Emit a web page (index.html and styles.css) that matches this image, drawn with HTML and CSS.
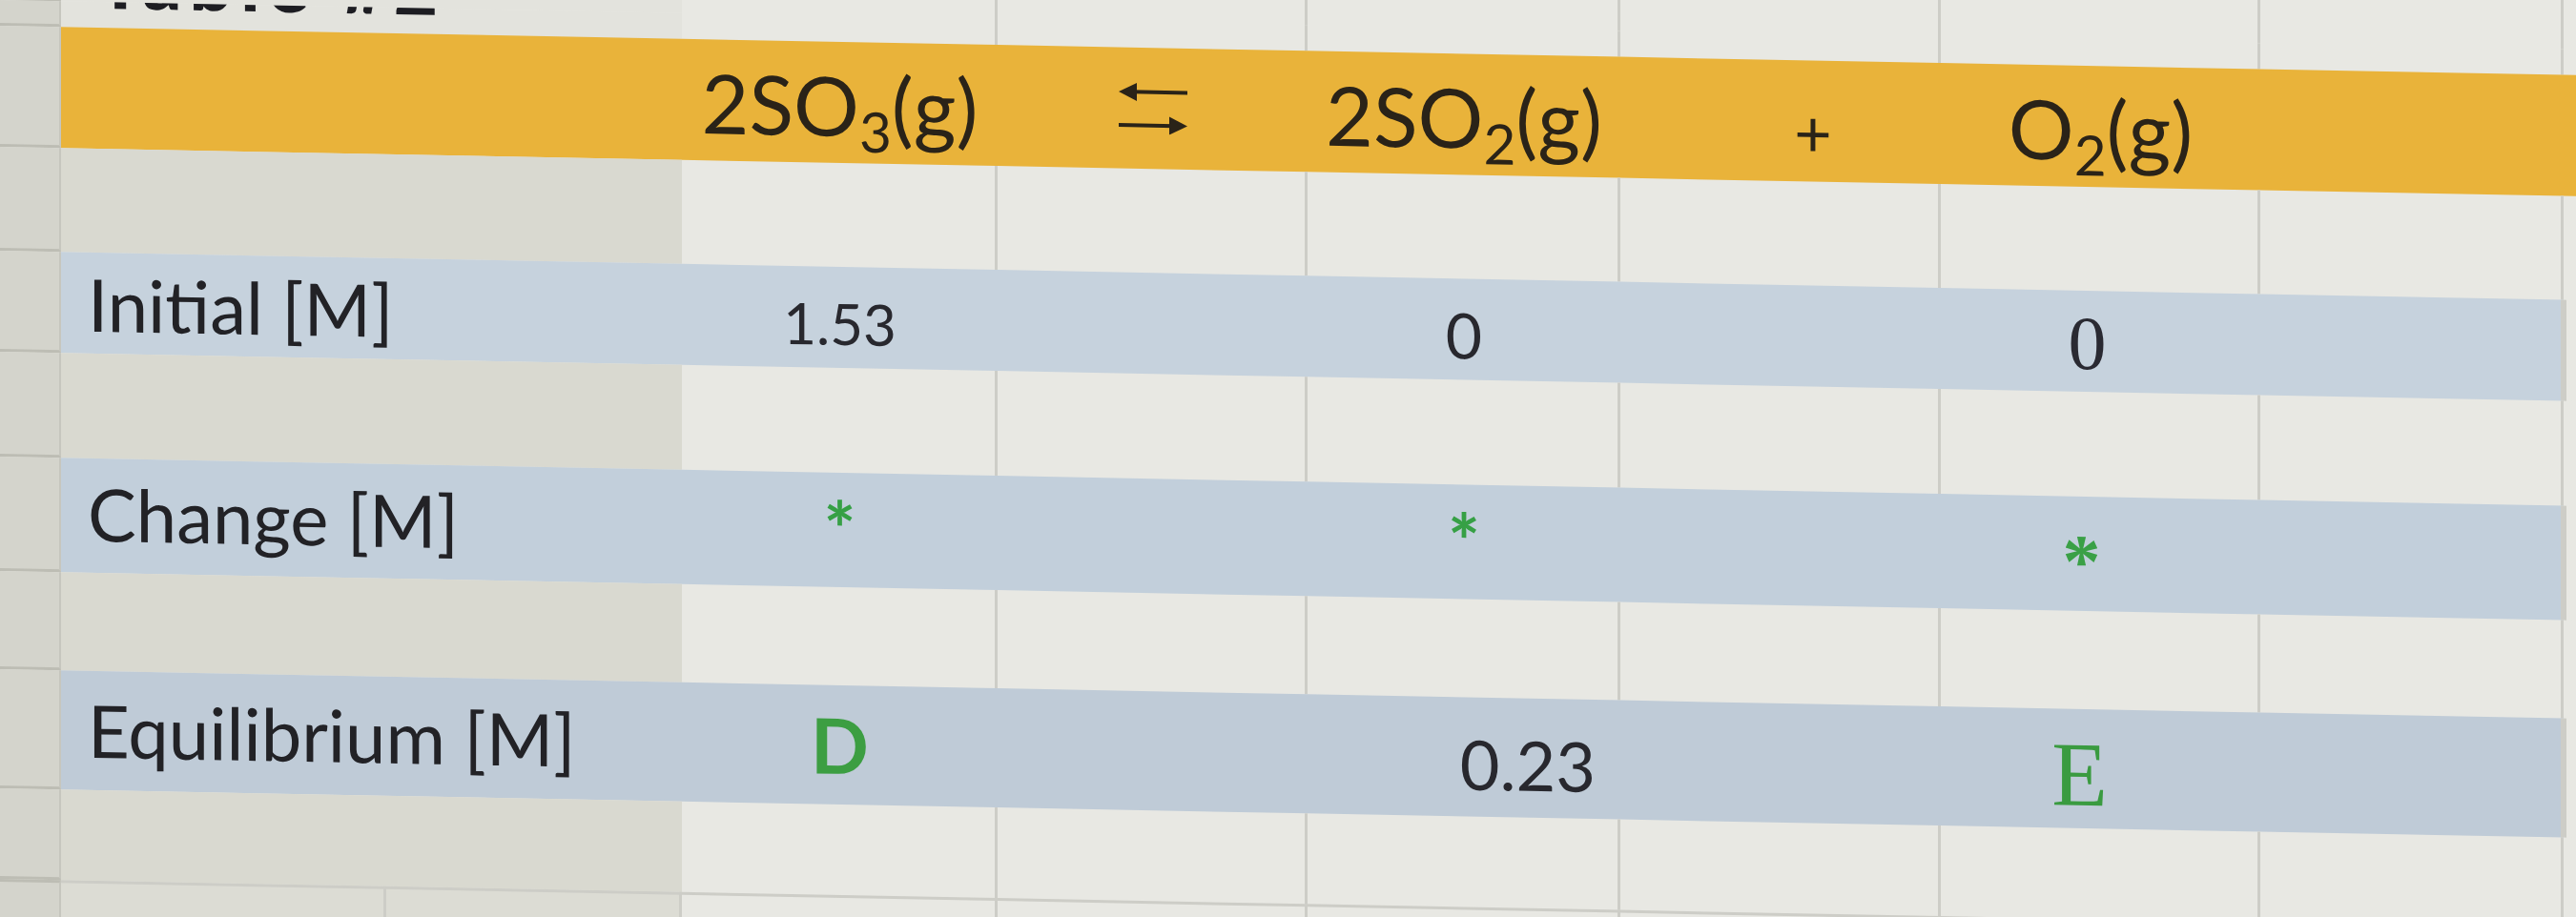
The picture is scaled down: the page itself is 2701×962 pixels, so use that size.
FILE: index.html
```html
<!DOCTYPE html>
<html lang="en">
<head>
<meta charset="utf-8">
<title>ICE table</title>
<link rel="stylesheet" href="styles.css">
</head>
<body>
<div class="sheet">
  <div class="row r-pre">
    <div class="c gut"></div><div class="c span2 top"></div>
    <div class="c ln"></div><div class="c ln"></div><div class="c ln"></div><div class="c ln"></div><div class="c ln"></div><div class="c ln"></div><div class="c"></div>
  </div>
  <div class="row r-title">
    <div class="c gut"></div>
    <div class="c span2 top title-cell"><span class="title">Table #2</span></div>
    <div class="c ln"></div><div class="c ln"></div><div class="c ln"></div><div class="c ln"></div><div class="c ln"></div><div class="c ln"></div><div class="c"></div>
  </div>
  <div class="row r-gold gold">
    <div class="c gut"></div>
    <div class="c span2"></div>
    <div class="c ctr"><span class="head">2SO<sub>3</sub>(g)</span></div>
    <div class="c ctr"><svg class="arrow" viewBox="0 0 72 54" width="72" height="54" aria-hidden="true"><rect x="14" y="7.5" width="58" height="4"/><polygon points="0,9.5 19,0 19,19"/><rect x="0" y="42.5" width="58" height="4"/><polygon points="72,44.5 53,35 53,54"/></svg></div>
    <div class="c ctr"><span class="head">2SO<sub>2</sub>(g)</span></div>
    <div class="c ctr plus-cell"><span class="plus">+</span></div>
    <div class="c ctr"><span class="head">O<sub>2</sub>(g)</span></div>
    <div class="c"></div>
    <div class="c"></div>
  </div>
  <div class="row r-b1">
    <div class="c gut"></div><div class="c span2 lfill"></div>
    <div class="c ln"></div><div class="c ln"></div><div class="c ln"></div><div class="c ln"></div><div class="c ln"></div><div class="c ln"></div><div class="c"></div>
  </div>
  <div class="row r-init blue1">
    <div class="c gut"></div>
    <div class="c span2 lab"><span class="label lab-init">Initial [M]</span></div>
    <div class="c ctr"><span class="num n153">1.53</span></div>
    <div class="c"></div>
    <div class="c ctr"><span class="num n0a">0</span></div>
    <div class="c"></div>
    <div class="c ctr h-serif0"><span class="serif0">0</span></div>
    <div class="c ln"></div>
    <div class="c white"></div>
  </div>
  <div class="row r-b2">
    <div class="c gut"></div><div class="c span2 lfill"></div>
    <div class="c ln"></div><div class="c ln"></div><div class="c ln"></div><div class="c ln"></div><div class="c ln"></div><div class="c ln"></div><div class="c"></div>
  </div>
  <div class="row r-change blue2">
    <div class="c gut"></div>
    <div class="c span2 lab"><span class="label lab-change">Change [M]</span></div>
    <div class="c ctr"><span class="star">*</span></div>
    <div class="c"></div>
    <div class="c ctr"><span class="star">*</span></div>
    <div class="c"></div>
    <div class="c ctr h-star"><span class="star-serif">*</span></div>
    <div class="c ln"></div>
    <div class="c white"></div>
  </div>
  <div class="row r-b3">
    <div class="c gut"></div><div class="c span2 lfill"></div>
    <div class="c ln"></div><div class="c ln"></div><div class="c ln"></div><div class="c ln"></div><div class="c ln"></div><div class="c ln"></div><div class="c"></div>
  </div>
  <div class="row r-eq blue3">
    <div class="c gut"></div>
    <div class="c span2 lab"><span class="label lab-eq">Equilibrium [M]</span></div>
    <div class="c ctr"><span class="ansD">D</span></div>
    <div class="c"></div>
    <div class="c right"><span class="num n023">0.23</span></div>
    <div class="c"></div>
    <div class="c ctr h-E"><span class="ansE">E</span></div>
    <div class="c ln"></div>
    <div class="c white"></div>
  </div>
  <div class="row r-b4">
    <div class="c gut"></div><div class="c span2 lfill"></div>
    <div class="c ln"></div><div class="c ln"></div><div class="c ln"></div><div class="c ln"></div><div class="c ln"></div><div class="c ln"></div><div class="c"></div>
  </div>
  <div class="row r-last">
    <div class="c gut"></div><div class="c ln lastb"></div><div class="c ln lastc"></div>
    <div class="c ln"></div><div class="c ln"></div><div class="c ln"></div><div class="c ln"></div><div class="c ln"></div><div class="c ln"></div><div class="c"></div>
  </div>
</div>
</body>
</html>
```

FILE: styles.css
```css
* { box-sizing: border-box; }

html, body {
  margin: 0;
  padding: 0;
  width: 2701px;
  height: 962px;
  overflow: hidden;
  background: #e8e8e3;
}

.sheet {
  display: flex;
  flex-direction: column;
  margin-top: -60px;
  transform: skewY(1.1deg);
  transform-origin: 0 60px;
  font-family: Lato, "Noto Sans", sans-serif;
  color: #242428;
}

.row {
  display: grid;
  grid-template-columns: 64px 341px 310px 331px 325px 328px 336px 335px 318px 1fr;
}

.r-pre   { height: 60px; }
.r-title { height: 27px; }
.r-gold  { height: 127px; }
.r-b1    { height: 109px; }
.r-init  { height: 106px; }
.r-b2    { height: 110px; }
.r-change{ height: 120px; }
.r-b3    { height: 103px; }
.r-eq    { height: 125px; }
.r-b4    { height: 95px; }
.r-last  { height: 140px; }

.c {
  display: flex;
  align-items: flex-end;
  min-width: 0;
  overflow: visible;
}

.span2 { grid-column: span 2; }
.ctr { justify-content: center; }
.right { justify-content: flex-end; padding-right: 26px; }

.ln { border-right: 3px solid #cdcdc7; }

.gut {
  background: #d4d4cc;
  border-bottom: 3px solid #bdbdb4;
  border-right: 2px solid #c6c6be;
}

.top { background: #e3e3dd; }
.lfill { background: #d9d9d0; }

.gold > .c:not(.gut) { background: #e9b33a; }
.blue1 > .c:not(.gut):not(.white) { background: #c6d2dd; }
.blue2 > .c:not(.gut):not(.white) { background: #c2cfdb; }
.blue3 > .c:not(.gut):not(.white) { background: #bfcbd7; }
.white { background: #e8e8e3; border-left: 3px solid #cdcdc7; }

.r-last > .c { border-top: 3px solid #cdcdc7; }
.r-last > .gut { border-top: 3px solid #bdbdb4; }
.lastb, .lastc { background: #dcdcd4; }

/* title sliver: only the foot of the letters shows above the table */
.title-cell { overflow: hidden; align-items: flex-start; padding-left: 38px; }
.title {
  display: block;
  font-weight: 900;
  font-size: 80px;
  line-height: 1;
  margin-top: -64px;
  letter-spacing: 8px;
  color: #1d1d22;
}

/* header */
.head {
  font-size: 86px;
  line-height: 1;
  margin-bottom: 18px;
  color: #2a2318;
  white-space: nowrap;
}
.head sub {
  font-size: 0.68em;
  line-height: 0;
  vertical-align: -0.28em;
}
.arrow { fill: #2a2318; margin-bottom: 36px; }
.plus-cell { padding-left: 68px; }
.plus {
  font-size: 68px;
  line-height: 1;
  margin-bottom: 18px;
  color: #2a2318;
}

/* labels */
.lab { padding-left: 28px; }
.label {
  font-size: 76px;
  line-height: 1;
  white-space: nowrap;
  color: #222226;
}
.lab-init { margin-bottom: 14px; }
.lab-change { margin-bottom: 24px; }
.lab-eq { margin-bottom: 25px; }

.num { line-height: 1; color: #28282e; }
.n153 { font-size: 60px; margin-bottom: 17px; }
.n0a { font-size: 66px; margin-bottom: 14px; }
.n023 { font-size: 72px; margin-bottom: 20px; }

.h-serif0 { padding-right: 28px; }
.serif0 {
  font-family: "Liberation Serif", serif;
  font-size: 80px;
  line-height: 1;
  margin-bottom: 11px;
  color: #2a2a32;
}

.star {
  font-weight: 700;
  font-size: 80px;
  line-height: 1;
  margin-bottom: 22px;
  color: #36a045;
}
.h-star { padding-right: 40px; }
.star-serif {
  font-family: "Liberation Serif", serif;
  font-weight: 700;
  font-size: 80px;
  line-height: 1;
  margin-bottom: 12px;
  color: #3aa046;
}

.ansD {
  font-weight: 700;
  font-size: 80px;
  line-height: 1;
  margin-bottom: 23px;
  color: #3c9e42;
}
.h-E { padding-right: 44px; }
.ansE {
  font-family: "Liberation Serif", serif;
  font-size: 96px;
  line-height: 1;
  margin-bottom: 8px;
  color: #3a9b40;
}
```
